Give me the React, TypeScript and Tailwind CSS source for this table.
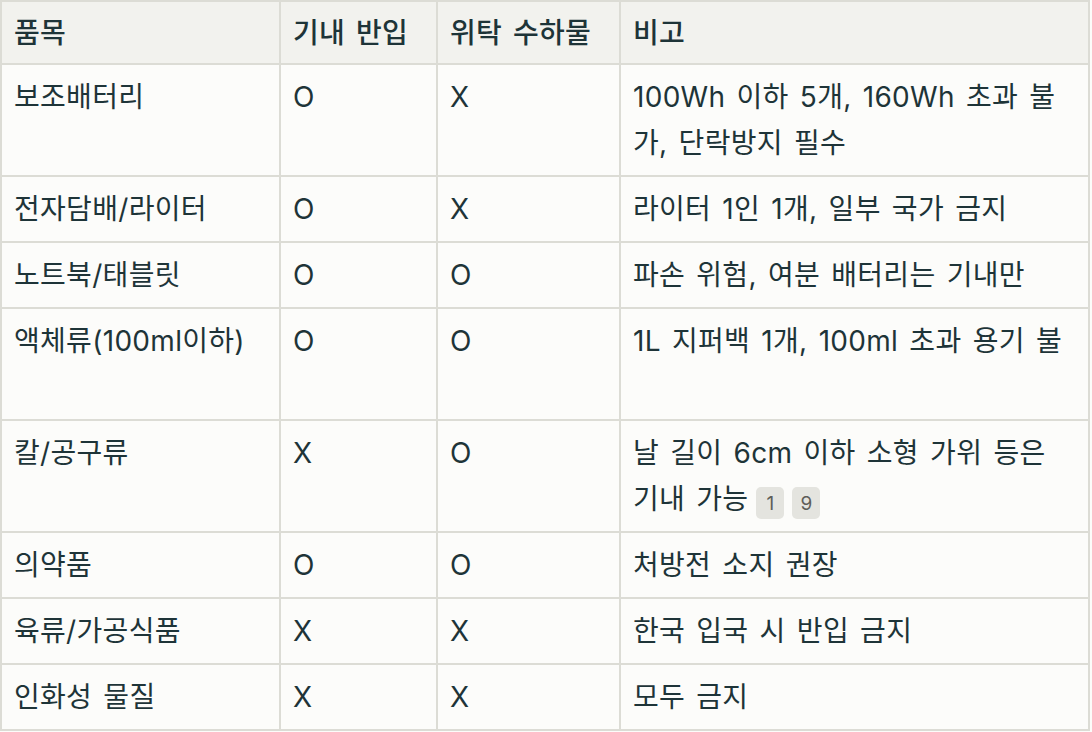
import React from 'react';

type Row = {
  item: string;
  carryOn: string;
  checked: string;
  note: React.ReactNode;
};

const Badge = ({ n }: { n: number }) => (
  <span className="ml-[8px] inline-flex h-[32px] w-[28px] translate-y-[2px] items-center justify-center rounded-[5px] bg-[#e4e4df] align-middle text-[19px] leading-none tracking-normal text-[#5e5e59]">
    {n}
  </span>
);

const rows: Row[] = [
  {
    item: '보조배터리',
    carryOn: 'O',
    checked: 'X',
    note: (
      <>
        100Wh 이하 5개, 160Wh 초과 불
        <br />
        가, 단락방지 필수
      </>
    ),
  },
  { item: '전자담배/라이터', carryOn: 'O', checked: 'X', note: '라이터 1인 1개, 일부 국가 금지' },
  { item: '노트북/태블릿', carryOn: 'O', checked: 'O', note: '파손 위험, 여분 배터리는 기내만' },
  {
    item: '액체류(100ml이하)',
    carryOn: 'O',
    checked: 'O',
    note: (
      <>
        1L 지퍼백 1개, 100ml 초과 용기 불
        <br />
        &nbsp;
      </>
    ),
  },
  {
    item: '칼/공구류',
    carryOn: 'X',
    checked: 'O',
    note: (
      <>
        날 길이 6cm 이하 소형 가위 등은
        <br />
        기내 가능
        <Badge n={1} />
        <Badge n={9} />
      </>
    ),
  },
  { item: '의약품', carryOn: 'O', checked: 'O', note: '처방전 소지 권장' },
  { item: '육류/가공식품', carryOn: 'X', checked: 'X', note: '한국 입국 시 반입 금지' },
  { item: '인화성 물질', carryOn: 'X', checked: 'X', note: '모두 금지' },
];

export default function App() {
  const font = { fontFamily: '"Inter", "Noto Sans CJK KR", sans-serif' };
  const th = 'border-2 border-[#dcdcd5] px-3 pt-[8px] pb-[7px] text-left align-top font-medium';
  const td = 'border-2 border-[#dcdcd5] px-3 py-[9px] align-top';

  return (
    <div className="min-h-[732px] w-[1092px] bg-[#fcfcfa]" style={font}>
      <table className="w-[1090px] table-fixed border-collapse text-[28px] leading-[46px] tracking-[0.3px] text-[#1e3438] [word-spacing:3px]">
        <colgroup>
          <col className="w-[279px]" />
          <col className="w-[157px]" />
          <col className="w-[183px]" />
          <col />
        </colgroup>
        <thead>
          <tr className="bg-[#f2f2ee]">
            <th className={th}>품목</th>
            <th className={th}>기내 반입</th>
            <th className={th}>위탁 수하물</th>
            <th className={th}>비고</th>
          </tr>
        </thead>
        <tbody>
          {rows.map((r) => (
            <tr key={r.item} className="bg-[#fcfcfa]">
              <td className={td}>{r.item}</td>
              <td className={td}>{r.carryOn}</td>
              <td className={td}>{r.checked}</td>
              <td className={td}>{r.note}</td>
            </tr>
          ))}
        </tbody>
      </table>
    </div>
  );
}
